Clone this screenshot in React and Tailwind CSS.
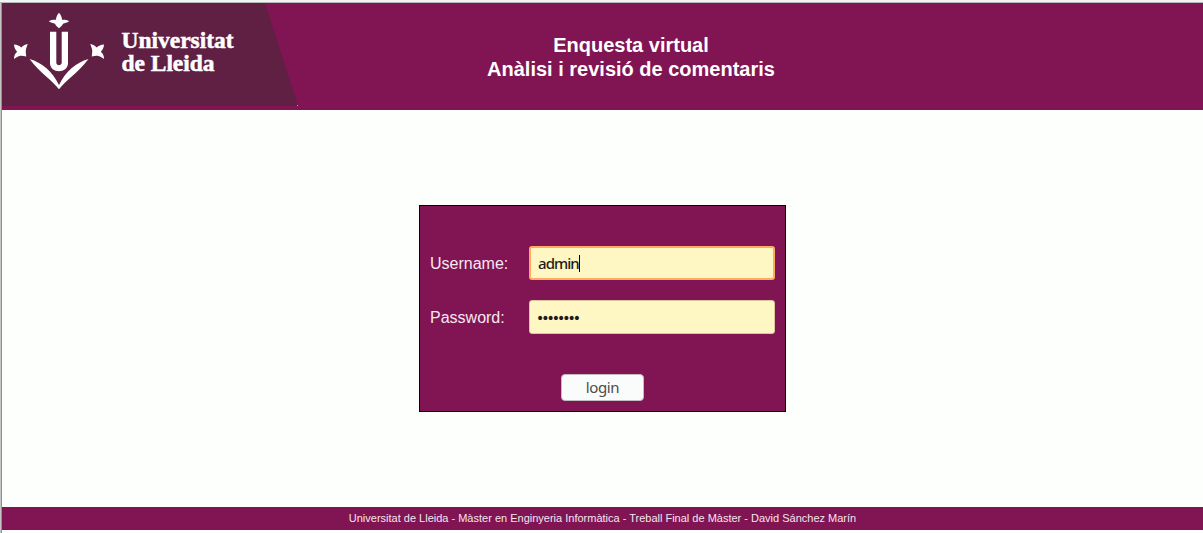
const BIRD =
  "M12 41.5C15 41.7 17.500 42.700 19.300 44.500C21 42.500 23 41.500 25.800 41C24.800 43.500 24 45.500 23.800 47.500C23.600 49.500 24.200 51.500 24.200 53.500C21.500 53 19.500 52.500 17.500 53C15.500 53.500 14 54.500 12 56C12 53 12.800 50.700 15.200 48.800C13.200 47 12.200 44.500 12 41.500Z";

function Logo() {
  return (
    <svg width="298" height="103" viewBox="0 0 298 103" className="block shrink-0">
      <path d="M0 0H263L296 103H0Z" fill="#5f2044" />
      <rect x="295" y="102" width="1" height="1" fill="#c9a0b4" />
      <g fill="#fff">
        <path d="M57 9.700C58.700 11.500 60 14 60 16.800C62.500 16.600 65 17 67.200 18.300C65 19.600 63 20.400 61 20.700C60 22.700 58.700 24 57 25.200C55.300 24 54 22.700 53 20.700C51 20.400 49 19.600 46.800 18.300C49 17 51.500 16.600 54 16.800C54 14 55.300 11.500 57 9.700Z" />
        <path d={BIRD} />
        <path d={BIRD} transform="matrix(-1 0 0 1 114 0)" />
        <path d="M48 28.700H54.300V59.500C54.300 63.200 59.700 63.200 59.700 59.500V28.700H66V60C66 71 48 71 48 60Z" />
        <path d="M27.500 56C40 59.500 50.500 68.500 57 82C63.500 68.500 74 59.500 86.500 56C75 71 64 77 57 86.300C50 77 39 71 27.500 56Z" />
      </g>
      <g
        fill="#fff"
        stroke="#fff"
        strokeWidth="0.5"
        fontFamily="'Liberation Serif', serif"
        fontWeight="700"
        fontSize="23.5"
      >
        <text x="119.500" y="45" textLength="112">Universitat</text>
        <text x="119.500" y="68" textLength="93">de Lleida</text>
      </g>
    </svg>
  );
}

export default function App() {
  return (
    <div className="flex h-[533px] w-full flex-col overflow-hidden bg-[#fdfffd] font-['Liberation_Sans',sans-serif]">
      <div className="h-[3px] shrink-0 border-b border-[#b9b9b7] bg-[#f1f5f5]" />
      <div className="flex min-h-0 flex-1">
        <div className="w-[2px] shrink-0 border-r border-[#8f918f] bg-[#c5c7c5]" />
        <div className="flex min-w-0 flex-1 flex-col">
          <header className="flex h-[107px] shrink-0 bg-[#811453]">
            <Logo />
            <h1 className="ml-[187px] mt-[30px] w-[288px] whitespace-nowrap text-center text-[20px] leading-6 font-bold text-white">
              Enquesta virtual
              <br />
              Anàlisi i revisió de comentaris
            </h1>
          </header>

          <main className="flex flex-1 justify-center pt-[95px]">
            <form className="flex h-[207px] w-[367px] flex-col border border-black bg-[#811453] px-[10px] pt-[40px] text-[16px] text-[#f5e9f0]">
              <div className="flex h-[34px] items-center">
                <label htmlFor="username" className="w-[99px] pt-[2px]">Username:</label>
                <div className="relative">
                  <input
                    id="username"
                    defaultValue="admin"
                    className="block h-[34px] w-[246px] rounded-[3px] border-2 border-[#ffa963] bg-[#fff7c3] px-[7px] font-['Noto_Sans',sans-serif] text-[15px] font-medium tracking-[-0.95px] text-[#1f1a17] outline-none"
                  />
                  <span className="absolute top-[9px] left-[50px] h-[17px] w-px bg-black" />
                </div>
              </div>
              <div className="mt-[20px] flex h-[34px] items-center">
                <label htmlFor="password" className="w-[99px] pt-[2px]">Password:</label>
                <input
                  id="password"
                  type="password"
                  defaultValue="12345678"
                  className="block h-[34px] w-[246px] rounded-[3px] border border-[#dcc59c] bg-[#fff7c3] px-[6px] pt-[1px] font-['DejaVu_Sans',sans-serif] text-[14px] tracking-[-3px] text-[#1f1a17] outline-none"
                />
              </div>
              <button
                type="button"
                className="mt-[40px] h-[27px] w-[83px] self-center rounded-[4px] border border-[#c3bcc0] bg-[#fafcfb] font-['Noto_Sans',sans-serif] text-[15px] leading-none tracking-[-0.35px] text-[#4c4c4c]"
              >
                login
              </button>
            </form>
          </main>

          <footer className="mb-[3px] h-[23px] shrink-0 bg-[#811453] text-center text-[11px] leading-[23px] text-[#f3e6ed]">
            Universitat de Lleida - Màster en Enginyeria Informàtica - Treball Final de Màster - David Sánchez Marín
          </footer>
        </div>
      </div>
    </div>
  );
}
